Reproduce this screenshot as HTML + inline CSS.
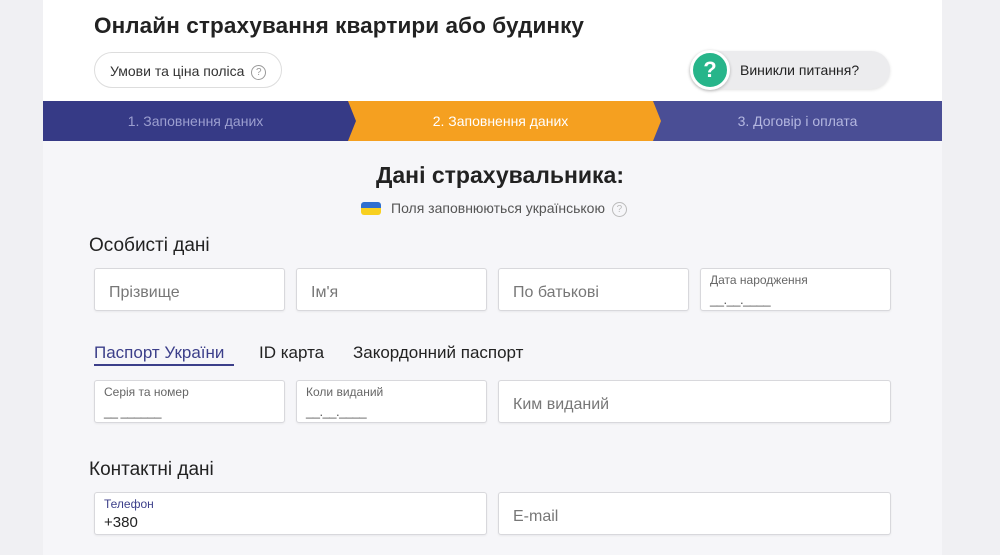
<!DOCTYPE html>
<html><head><meta charset="utf-8"><style>
*{box-sizing:border-box;margin:0;padding:0}
body{width:1000px;height:555px;overflow:hidden;background:#f0f0f3;font-family:"Liberation Sans",Arial,sans-serif;position:relative}
.abs{position:absolute}
.main{position:absolute;left:43px;top:0;width:899px;height:555px;background:#f6f6f9}
.head{position:absolute;left:43px;top:0;width:899px;height:101px;background:#fff}
h1{position:absolute;left:94px;top:13px;font-size:22.5px;font-weight:bold;color:#222;letter-spacing:.1px}
.pill{position:absolute;left:94px;top:52px;width:188px;height:36px;border:1px solid #ddd;border-radius:18px;font-size:14px;color:#333;padding:10px 0 0 15px;background:#fff}
.q{display:inline-block;width:15px;height:15px;border:1px solid #999;border-radius:50%;font-size:10px;color:#999;text-align:center;line-height:13px;vertical-align:middle;margin-left:3px}
.help{position:absolute;left:690px;top:51px;width:200px;height:38px;border-radius:19px;background:#ececee;box-shadow:0 1px 3px rgba(0,0,0,.12)}
.help .c{position:absolute;left:0px;top:-1px;width:40px;height:40px;border-radius:50%;background:#27b58a;border:3px solid #fff;box-shadow:0 1px 3px rgba(0,0,0,.25);color:#fff;font-weight:bold;font-size:22px;text-align:center;line-height:34px}
.help span{position:absolute;left:50px;top:11px;font-size:14px;color:#222}
.step{position:absolute;top:101px;height:40px;font-size:14px;line-height:40px;text-align:center;font-weight:bold}
.inp{position:absolute;height:43px;background:#fff;border:1px solid #d8d8dc;border-radius:3px;box-shadow:0 1px 2px rgba(0,0,0,.06);color:#777;font-size:16px;padding:15px 0 0 14px}
.inp.s{padding:4px 0 0 9px;font-size:12px;color:#666}
.inp.s b{display:block;font-weight:normal;color:#555;font-size:13px;margin-top:5px;letter-spacing:-.5px}
.sec{position:absolute;left:89px;font-size:19px;color:#222}
</style></head><body>
<div class="main"></div>
<div class="head"></div>
<h1>Онлайн страхування квартири або будинку</h1>
<div class="pill">Умови та ціна поліса <span class="q">?</span></div>
<div class="help"><div class="c">?</div><span>Виникли питання?</span></div>
<svg class="abs" style="left:43px;top:101px" width="899" height="40">
<rect x="0" y="0" width="899" height="40" fill="#4a4e95"/>
<polygon points="0,0 305,0 313,20 305,40 0,40" fill="#363a86"/>
<polygon points="305,0 610,0 618,20 610,40 305,40 313,20" fill="#f5a020"/>
</svg>
<div class="step" style="left:43px;width:305px;color:#9c9fd0;font-weight:normal">1. Заповнення даних</div>
<div class="step" style="left:348px;width:305px;color:#fff;font-weight:normal">2. Заповнення даних</div>
<div class="step" style="left:653px;width:289px;color:#b4b7e0;font-weight:normal">3. Договір і оплата</div>
<div class="abs" style="left:0;width:1000px;top:162px;text-align:center;font-size:23px;font-weight:bold;color:#222">Дані страхувальника:</div>
<div class="abs" style="left:361px;top:202px;width:20px;height:13px;border-radius:3px;overflow:hidden"><div style="height:6px;background:#2f6fd0"></div><div style="height:7px;background:#f8d020"></div></div>
<div class="abs" style="left:391px;top:200px;font-size:14px;color:#555">Поля заповнюються українською <span class="q" style="border-color:#bbb;color:#bbb">?</span></div>
<div class="sec" style="top:235px">Особисті дані</div>
<div class="inp" style="left:94px;top:268px;width:191px">Прізвище</div>
<div class="inp" style="left:296px;top:268px;width:191px">Ім'я</div>
<div class="inp" style="left:498px;top:268px;width:191px">По батькові</div>
<div class="inp s" style="left:700px;top:268px;width:191px">Дата народження<b>__.__.____</b></div>
<div class="abs" style="left:94px;top:343px;font-size:17px;color:#3c3f8a">Паспорт України</div>
<div class="abs" style="left:94px;top:364px;width:140px;height:2px;background:#3c3f8a"></div>
<div class="abs" style="left:259px;top:343px;font-size:17px;color:#222">ID карта</div>
<div class="abs" style="left:353px;top:343px;font-size:17px;color:#222">Закордонний паспорт</div>
<div class="inp s" style="left:94px;top:380px;width:191px">Серія та номер<b>__ ______</b></div>
<div class="inp s" style="left:296px;top:380px;width:191px">Коли виданий<b>__.__.____</b></div>
<div class="inp" style="left:498px;top:380px;width:393px">Ким виданий</div>
<div class="sec" style="top:459px">Контактні дані</div>
<div class="inp s" style="left:94px;top:492px;width:393px;color:#3c3f8a">Телефон<b style="color:#222;font-size:15px;margin-top:3px;letter-spacing:0">+380</b></div>
<div class="inp" style="left:498px;top:492px;width:393px">E-mail</div>
</body></html>
